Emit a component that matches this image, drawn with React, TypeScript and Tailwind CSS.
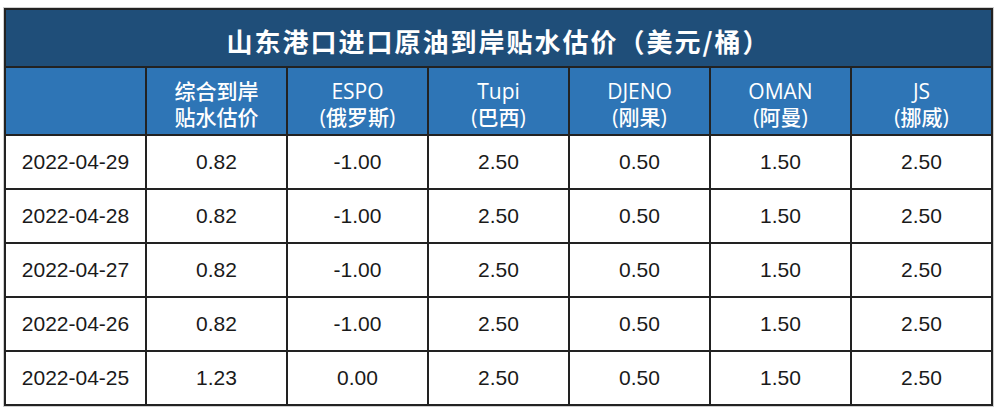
const columns = [
  { name: "", sub: "" },
  { name: "综合到岸", sub: "贴水估价" },
  { name: "ESPO", sub: "(俄罗斯)" },
  { name: "Tupi", sub: "(巴西)" },
  { name: "DJENO", sub: "(刚果)" },
  { name: "OMAN", sub: "(阿曼)" },
  { name: "JS", sub: "(挪威)" },
];

const rows = [
  ["2022-04-29", "0.82", "-1.00", "2.50", "0.50", "1.50", "2.50"],
  ["2022-04-28", "0.82", "-1.00", "2.50", "0.50", "1.50", "2.50"],
  ["2022-04-27", "0.82", "-1.00", "2.50", "0.50", "1.50", "2.50"],
  ["2022-04-26", "0.82", "-1.00", "2.50", "0.50", "1.50", "2.50"],
  ["2022-04-25", "1.23", "0.00", "2.50", "0.50", "1.50", "2.50"],
];

export default function App() {
  return (
    <div className="w-[1000px] h-[414px] bg-white pt-[7px] pl-[3px]">
      <div className="w-[991px] border border-[#cfcfcf]">
        <table className="w-[989px] table-fixed border-collapse border-2 border-[#222]">
          <thead>
            <tr>
              <th
                colSpan={7}
                className="h-[58px] bg-[#1f4e79] border-2 border-[#222] text-white text-[26px] font-bold tracking-[2px] pt-[5px]"
                style={{ fontFamily: '"Noto Sans CJK SC", sans-serif' }}
              >
                山东港口进口原油到岸贴水估价（美元/桶）
              </th>
            </tr>
            <tr>
              {columns.map((c, i) => (
                <th
                  key={i}
                  className="h-[68px] bg-[#2e75b6] border-2 border-[#222] text-white text-[21px] font-medium leading-[26px] pt-[5px]"
                  style={{ fontFamily: '"Open Sans", "Noto Sans CJK SC", sans-serif' }}
                >
                  <div>{c.name}</div>
                  <div>{c.sub}</div>
                </th>
              ))}
            </tr>
          </thead>
          <tbody>
            {rows.map((r, i) => (
              <tr key={i}>
                {r.map((v, j) => (
                  <td
                    key={j}
                    className="h-[54px] border-2 border-[#222] text-center text-[21px] text-[#1a1a1a]"
                    style={{ fontFamily: '"Liberation Sans", Arial, sans-serif' }}
                  >
                    {v}
                  </td>
                ))}
              </tr>
            ))}
          </tbody>
        </table>
      </div>
    </div>
  );
}
